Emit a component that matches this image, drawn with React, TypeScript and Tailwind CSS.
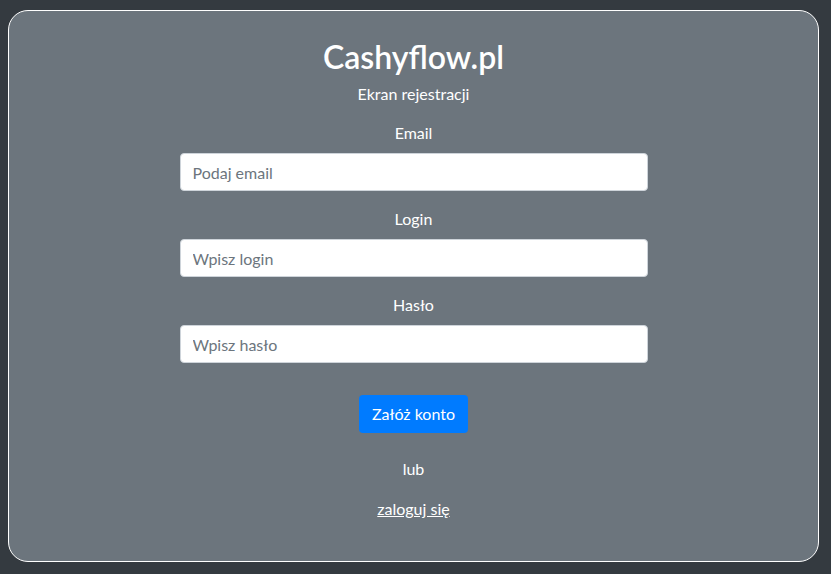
import React from 'react';

const fields = [
  { label: 'Email', placeholder: 'Podaj email', type: 'email' },
  { label: 'Login', placeholder: 'Wpisz login', type: 'text' },
  { label: 'Hasło', placeholder: 'Wpisz hasło', type: 'password' },
];

const App: React.FC = () => {
  return (
    <div className="min-h-[574px] bg-[#343a40] pt-2.5 pb-3 pl-2 pr-3 font-['Lato','Noto_Sans',sans-serif]">
      <div className="flex flex-col items-center rounded-[20px] border border-white bg-[#6c757d] pt-[27px] pb-10 text-white">
        <h1 className="text-[32px] leading-[38px] font-semibold">Cashyflow.pl</h1>
        <p className="mt-[6px] text-base leading-6">Ekran rejestracji</p>

        <form className="mt-[15px] flex w-[468px] flex-col">
          {fields.map((field, i) => (
            <div key={field.label} className={i > 0 ? 'mt-4 flex flex-col' : 'flex flex-col'}>
              <label className="mb-2 text-center text-base leading-6">{field.label}</label>
              <input
                type={field.type}
                placeholder={field.placeholder}
                className="h-[38px] rounded border border-[#ced4da] bg-white px-3 text-base text-[#495057] placeholder:text-[#6c757d] outline-none"
              />
            </div>
          ))}
          <button
            type="button"
            className="mx-auto mt-8 h-[38px] rounded bg-[#007bff] px-[13px] text-base leading-6 text-white"
          >
            Załóż konto
          </button>
        </form>

        <p className="mt-6 text-base leading-6">lub</p>
        <a href="#" className="mt-4 text-base leading-6 text-white underline">
          zaloguj się
        </a>
      </div>
    </div>
  );
};

export default App;
